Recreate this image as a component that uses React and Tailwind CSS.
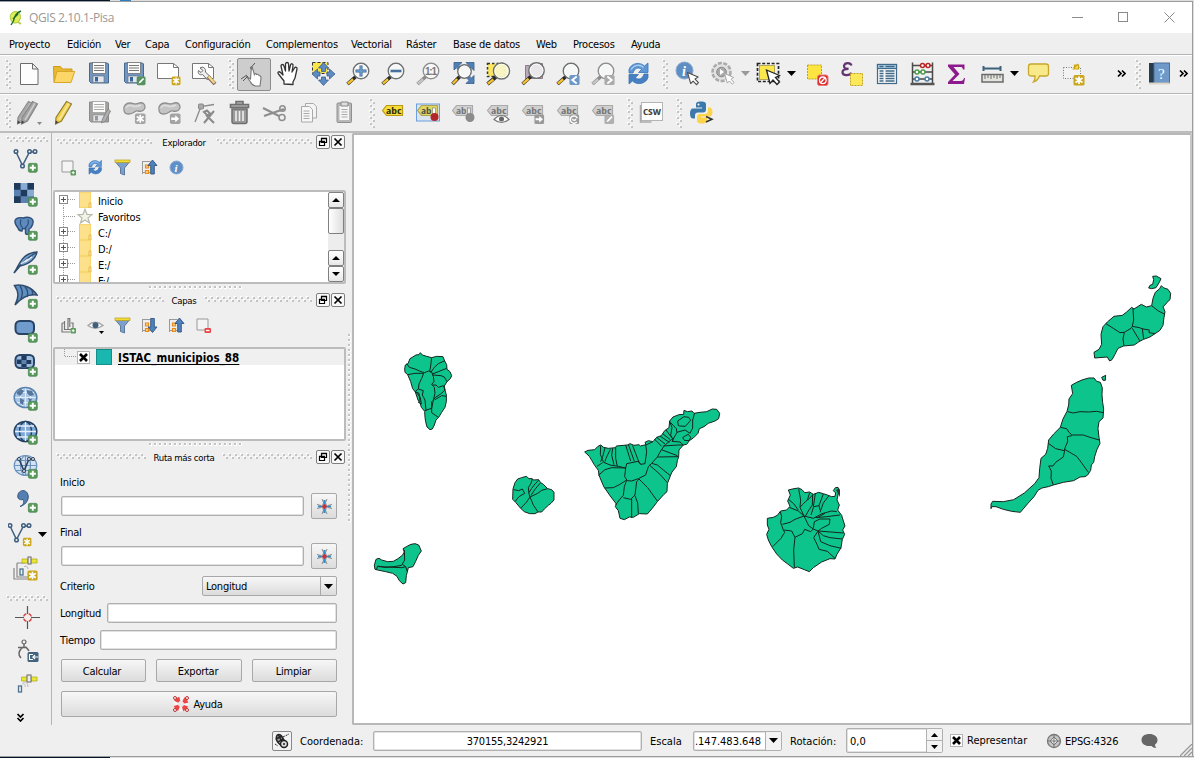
import React from "react";

/* ---------- shared drawing parts ---------- */

const Ic = ({ children, s = 25, className = "" }) => (
  <svg width={s} height={s} viewBox={`0 0 ${s} ${s}`} className={`shrink-0 ${className}`} fill="none">
    {children}
  </svg>
);

const Cell = ({ children, className = "w-[35px]" }) => (
  <div className={`flex h-[35px] shrink-0 items-center justify-center ${className}`}>{children}</div>
);

const Lbl = ({ children, className = "" }) => <span className={`pt-[2px] ${className}`}>{children}</span>;

const Down = ({ color = "#000" }) => (
  <svg width="9" height="5" viewBox="0 0 9 5" className="shrink-0"><path d="M0 0h9L4.500 5z" fill={color} /></svg>
);

function GripV({ h = 30 }) {
  const n = Math.floor(h / 6);
  return (
    <svg width="7" height={h} viewBox={`0 0 7 ${h}`} className="shrink-0">
      {Array.from({ length: n }, (_, i) => (
        <g key={i}>
          <rect x="0" y={i * 6} width="2" height="2" fill="#fff" />
          <rect x="1" y={i * 6 + 1} width="2" height="2" fill="#c4c4c4" />
          <rect x="3" y={i * 6 + 3} width="2" height="2" fill="#fff" />
          <rect x="4" y={i * 6 + 4} width="2" height="2" fill="#c4c4c4" />
        </g>
      ))}
    </svg>
  );
}

function GripH({ w }) {
  const n = Math.floor(w / 6);
  return (
    <svg width={w} height="7" viewBox={`0 0 ${w} 7`} className="shrink-0">
      {Array.from({ length: n }, (_, i) => (
        <g key={i}>
          <rect x={i * 6} y="0" width="2" height="2" fill="#fff" />
          <rect x={i * 6 + 1} y="1" width="2" height="2" fill="#c4c4c4" />
          <rect x={i * 6 + 3} y="3" width="2" height="2" fill="#fff" />
          <rect x={i * 6 + 4} y="4" width="2" height="2" fill="#c4c4c4" />
        </g>
      ))}
    </svg>
  );
}

const Dots = ({ n, vertical = false }) => (
  <svg width={vertical ? 4 : n * 5} height={vertical ? n * 5 : 4} className="shrink-0">
    {Array.from({ length: n }, (_, i) => (
      <g key={i} transform={vertical ? `translate(0 ${i * 5})` : `translate(${i * 5} 0)`}>
        <rect width="3" height="3" fill="#fff" />
        <rect width="2" height="2" fill="#c2c2c2" />
      </g>
    ))}
  </svg>
);

const Chev = ({ down = false }) => (
  <svg width="9" height="9" viewBox="0 0 9 9" className={down ? "shrink-0 rotate-90" : "shrink-0"} fill="none">
    <path d="M1 1.500l3 3-3 3M5 1.500l3 3-3 3" stroke="#000" strokeWidth="1.700" />
  </svg>
);

const Badge = ({ x = 14.3, y = 15, kind = "plus", fill = "#5c9a5c", s = 9.6 }) => (
  <g transform={`translate(${x} ${y}) scale(${s / 10})`}>
    <rect x=".4" y=".4" width="9.200" height="9.200" rx="1.500" fill={fill} stroke={kind === "plus" ? "#40824a" : "none"} strokeWidth=".8" />
    {kind === "plus" && <path d="M5 1.800v6.400M1.800 5h6.400" stroke="#fff" strokeWidth="2" />}
    {kind === "star" && <path d="M5 1.500v7M2 3l6 4M8 3L2 7" stroke="#fff" strokeWidth="1.500" />}
    {kind === "pen" && <path d="M2.300 7.700l1-2L7 2l1.200 1.200L4.500 7z" fill="#fff" />}
    {kind === "arrow" && <path d="M1.500 4h3.500V2l3.500 3L5 8V6H1.500z" fill="#fff" />}
    {kind === "left" && <path d="M7 1.800L3 5l4 3.200" stroke="#fff" strokeWidth="1.700" />}
    {kind === "right" && <path d="M3 1.800L7 5 3 8.200" stroke="#fff" strokeWidth="1.700" />}
    {kind === "pin" && <path d="M7.500 7.500A3.500 3.500 0 1 1 8 4M3.500 4.500a1.500 1.500 0 1 0 3 0" stroke="#fff" strokeWidth="1.400" />}
  </g>
);

const Lens = ({ cx = 15, cy = 10, r = 7.7, gray = false, fill = "#f4f6f6", op = 0.95 }) => (
  <g>
    <path d={`M${cx - r * 0.7} ${cy + r * 0.75}L1.500 23`} stroke={gray ? "#8c8c8c" : "#2b2b2b"} strokeWidth="3.600" />
    <path d={`M${cx - r * 0.7 - 2.5} ${cy + r * 0.75 + 2.5}L1.800 22.700`} stroke={gray ? "#c6c6c6" : "#f5c12e"} strokeWidth="2.400" />
    <circle cx={cx} cy={cy} r={r} fill={fill} fillOpacity={op} stroke={gray ? "#8f8f8f" : "#6f7272"} strokeWidth="1.500" />
    <circle cx={cx} cy={cy} r={r - 1.3} stroke="#fff" strokeOpacity=".8" />
  </g>
);

const Cursor = ({ x, y, k = 1, gray = false }) => (
  <path transform={`translate(${x} ${y}) scale(${k})`} d="M0 0l3.500 12 2.600-2.700 3.600 4 2.200-2.200-3.700-4L11.500 5z" fill="#fff" stroke={gray ? "#a5a5a5" : "#4c4c4c"} strokeWidth="1.200" strokeLinejoin="round" />
);

const Floppy = ({ gray = false }) => (
  <g>
    <path d="M2.500 2h18l1 1v19H4l-1.500-1.500z" fill={gray ? "#a2a2a2" : "#7296bf"} stroke={gray ? "#8a8a8a" : "#46698f"} />
    <rect x="5.500" y="1.500" width="13" height="11" fill="#fbfbf9" stroke={gray ? "#999" : "#666"} strokeWidth=".7" />
    <path d="M7 4.500h10M7 7h10M7 9.500h10" stroke={gray ? "#aaa" : "#777"} strokeWidth="1.200" />
    <rect x="6" y="15" width="11" height="6.500" fill="#e2e6ea" stroke={gray ? "#8a8a8a" : "#5b6b7c"} strokeWidth=".6" />
    <rect x="8" y="16" width="3" height="4.500" fill={gray ? "#999" : "#37659c"} />
  </g>
);

const Refresh = ({ k = 1 }) => (
  <g transform={`scale(${k})`}>
    <path d="M3 12V8.500C5 2 14 .5 18.500 5L22 2v9.500h-9.500l3-3c-3-3-7-1.500-8.500 3.500z" fill="#5e97d5" stroke="#3a73b4" strokeWidth=".8" />
    <path d="M22 13v3.500C20 23 11 24.500 6.500 20L3 23v-9.500h9.500l-3 3c3 3 7 1.500 8.500-3.500z" fill="#4680c2" stroke="#3a73b4" strokeWidth=".8" />
    <path d="M5 8.500c3-5 9-5.500 12.500-2" stroke="#a9cdf0" strokeWidth="1.300" />
  </g>
);

const Label = ({ gray = false, children, txt = "abc" }) => (
  <Ic>
    <path d="M1.500 10.500L5.500 5.500H21.500V15.500H5.500z" fill={gray ? "#d0d0d0" : "#f5dc36"} stroke={gray ? "#aaa" : "#b99a16"} strokeWidth="1.200" />
    <text x="5" y="13.600" fontSize="9" fontWeight="bold" textLength={txt === "ab" ? 10.5 : 15.5} lengthAdjust="spacingAndGlyphs" fontFamily="Open Sans, sans-serif" letterSpacing="0" fill={gray ? "#777" : "#33300e"}>{txt}</text>
    {children}
  </Ic>
);

const Blob = ({ k }) => (
  <Ic>
    <path d="M2 10C1 6 4 3 8 3c4 0 5 2 9 0 4-1 6 1 6 4s-3 5-7 4c-3-1-4 3-9 3-3 0-5-1-5-4z" fill="#c4c4c4" stroke="#8f8f8f" strokeWidth="1.300" />
    <path d="M4 8c1-3 5-3 7-2s6 0 8-1" stroke="#dedede" strokeWidth="1.500" />
    <Badge x={12.5} y={13} s={11.5} kind={k} fill="#a4a4a4" />
  </Ic>
);

/* ---------- toolbars ---------- */

function ToolbarOne() {
  return (
    <div className="flex h-[38px] items-center border-t border-white pb-[2px] pl-[5px]">
      <GripV />
      <Cell><Ic><path d="M3.500 2.500h12l5.500 5.500v15.500H3.500z" fill="#fdfdfd" stroke="#6c6c6c" /><path d="M15.500 2.500v5.500h5.500z" fill="#eee" stroke="#6c6c6c" /></Ic></Cell>
      <Cell><Ic><path d="M2 21L1.500 5.500h7l2 2.500h9.500v3" fill="#e8b830" stroke="#d09b18" /><path d="M2 21.500L5 10.500h17.700L19 21.500z" fill="#fcd767" stroke="#d9a728" /></Ic></Cell>
      <Cell><Ic><Floppy /></Ic></Cell>
      <Cell><Ic><Floppy /><Badge kind="pen" fill="#579160" /></Ic></Cell>
      <Cell><Ic><path d="M.500 2.500h16l5 4v11H.500z" fill="#fff" stroke="#777" /><path d="M16.500 2.500v4h5" stroke="#777" /><Badge kind="star" fill="#cba61c" /></Ic></Cell>
      <Cell><Ic><path d="M.500 2.500h16l5 4v11H.500z" fill="#fff" stroke="#777" /><path d="M16.500 2.500v4h5" stroke="#777" /><path d="M8 7c3-2 6 0 5.500 4l5 5-3 3-5-5.500c-3 1-5-1-4-4l2.500 2 2-2z" fill="#eee" stroke="#666" /><path d="M16 15.500l7 7.500" stroke="#866" strokeWidth="4" /><path d="M16.500 15.500l6 6.500" stroke="#f2d77b" strokeWidth="2.500" /></Ic></Cell>
      <div className="flex w-[14px] justify-end pr-[1px]"><GripV /></div>
      <Cell>
        <div className="mt-[2px] flex h-[33px] w-[34px] items-center justify-center rounded-[2px] border border-[#8c8c8c] bg-[#cdcdcd]">
          <Ic><path d="M9.500 17L5.500 14.500l4 5.500c1 2.500 3 3.500 5 4h4.500l1-8c0-2.500-2-2.500-2-2.500s-.8-1.800-2.300-1c-.7-1.300-2.200-1-2.400-.2L12 7.500c-.8-1.500-2-1-1.800.5z" fill="#fff" stroke="#777" strokeWidth="1.100" /><path d="M9.500 6l4.500-5M0 17l6-4M2 19l5-5" stroke="#555" strokeWidth="1" /><circle cx="10.500" cy="5.800" r="1.600" fill="#777" /></Ic>
        </div>
      </Cell>
      <Cell><Ic><path d="M8 23v-3L2.500 13c-1.500-2 .5-3 2-1.500L7 14 5 5c0-2 2.500-2 3 0l1.500 5V3c0-2 3-2 3 0l.5 7 1.500-6c.5-2 3-1.500 2.500 1L16 11l2.500-4c1-1.500 3-.5 2.500 1l-2 9-2 4v2.500z" fill="#fff" stroke="#333" strokeWidth="1.300" strokeLinejoin="round" /></Ic></Cell>
      <Cell><Ic><rect x="1.500" y="1.500" width="15.500" height="11" fill="#fbe445" stroke="#333" strokeDasharray="3 2" /><path d="M12.500 1.500l5 5.500h-3v3.500h-4V7h-3zM12.500 24.500l5-5.500h-3v-3h-4v3h-3zM1 13l5.500-5v3H9v4H6.500v3zM24 13l-5.500-5v3H16v4h2.500v3z" fill="#5d8cc5" stroke="#385f8d" strokeWidth=".8" /></Ic></Cell>
      <Cell><Ic><Lens /><path d="M15 4.500v11M9.500 10h11" stroke="#41668f" strokeWidth="3" /><path d="M15 5.300v9.400M10.300 10h9.400" stroke="#6ea0d6" strokeWidth="1.500" /></Ic></Cell>
      <Cell><Ic><Lens /><path d="M9.500 10h11" stroke="#47729f" strokeWidth="2.600" /></Ic></Cell>
      <Cell><Ic><Lens gray /><text x="9" y="13.500" fontSize="10" fontWeight="bold" textLength="12" letterSpacing="0" fontFamily="Liberation Sans" fill="#777">1:1</text></Ic></Cell>
      <Cell><Ic><path d="M3 1.500h8L3 9zM23 1.500v8L15 1.500zM23 22.500h-8l8-8z" fill="#507fb6" stroke="#345c88" strokeWidth=".8" /><path d="M4 3l5 5M22 3l-5 5M22 21l-5-5" stroke="#507fb6" strokeWidth="4" /><Lens cx={13.5} cy={10.5} r={6.7} /></Ic></Cell>
      <Cell><Ic><rect x="1.500" y="2.500" width="17" height="13" fill="#fbe764" stroke="#333" strokeDasharray="2.500 2" strokeWidth="1.500" /><Lens cx={15.5} cy={10} r={8} fill="#f8f5c8" /></Ic></Cell>
      <Cell><Ic><path d="M4.500 4.500h4l3-2h10v15h-17z" fill="#b9a9b9" stroke="#8a7d8a" /><Lens cx={15.5} cy={9.500} r={7.700} fill="#eceaec" /></Ic></Cell>
      <Cell><Ic><Lens /><Badge x={13} y={13.5} s={11} kind="left" fill="#6d98c6" /></Ic></Cell>
      <Cell><Ic><Lens gray /><Badge x={13} y={13.5} s={11} kind="right" fill="#aaa" /></Ic></Cell>
      <Cell><Ic><Refresh /></Ic></Cell>
      <div className="flex w-[14px] justify-end pr-[1px]"><GripV /></div>
      <Cell><Ic><circle cx="9.500" cy="9.500" r="8.500" fill="#608ec3" stroke="#86a9d0" /><text x="7" y="14.500" fontSize="14" fontStyle="italic" fontWeight="bold" fontFamily="Liberation Serif" fill="#fff">i</text><Cursor x={12.500} y={11.500} k={0.92} /></Ic></Cell>
      <Cell><Ic><circle cx="11.500" cy="11" r="9" fill="#e2e2e2" stroke="#aaa" strokeWidth="2.500" strokeDasharray="4 1.500" /><circle cx="11.500" cy="11" r="4.800" fill="#aaa" stroke="#888" /><path d="M10 8l4 3-4 3z" fill="#fff" /><Cursor gray x={14.500} y={12.500} k={0.8} /></Ic></Cell>
      <Cell className="w-[10px]"><Down color="#999" /></Cell>
      <div className="w-[1px]" />
      <Cell><Ic><rect x="1.500" y="2.500" width="21" height="18" stroke="#222" strokeWidth="1.700" strokeDasharray="3 1.700" /><rect x="3.500" y="4.500" width="15" height="14" fill="#fce74c" stroke="#b7a75a" /><path d="M10.500 9l3.500 13.500 3-3.500 4 4.500 2.500-2.500-4-4.500 4-2z" fill="#fff" stroke="#222" strokeWidth="1.300" /></Ic></Cell>
      <Cell className="w-[10px]"><Down /></Cell>
      <div className="w-[4px]" />
      <Cell><Ic><rect x="2.500" y="4" width="14" height="14" fill="#fce541" stroke="#c3a320" strokeDasharray="2 1" /><rect x="12.500" y="14" width="10.500" height="10.500" rx="2" fill="#d92b2b" stroke="#e77" /><circle cx="17.800" cy="19.300" r="3.300" stroke="#fff" strokeWidth="1.300" /><path d="M15.500 21.800l4.600-5" stroke="#fff" strokeWidth="1.300" /></Ic></Cell>
      <Cell><Ic><path d="M11.500 4.500C10.500 1.500 5 1.300 4 4.800c-.5 2 2 3.200 4.500 3-4 0-6 1-6 3.500 0 3.800 7.500 3.500 9 .5" stroke="#653370" strokeWidth="2.200" /><rect x="10.500" y="12.500" width="12" height="12" fill="#fce95a" stroke="#c3a320" strokeDasharray="2 1" /></Ic></Cell>
      <Cell><Ic><rect x="2.500" y="3.500" width="19" height="19" fill="#f6f8fa" stroke="#426a87" strokeWidth="1.200" /><rect x="2.500" y="3.500" width="19" height="4" fill="#a8d2ec" stroke="#426a87" strokeWidth="1.200" /><path d="M4.500 10h4M10.500 10h9M4.500 12.500h4M10.500 12.500h9M4.500 15h4M10.500 15h9M4.500 17.500h4M10.500 17.500h9M4.500 20h4M10.500 20h9M4.500 5.500h4M10.500 5.500h9" stroke="#426a87" strokeWidth="1.300" /></Ic></Cell>
      <Cell><Ic><path d="M2.500 1.500v22M22.500 1.500v22M2 4.500h21M2 11h21M2 18h21" stroke="#4a4a4a" strokeWidth="1.500" /><path d="M.500 23h24" stroke="#555" strokeWidth="2.500" /><g fill="#fff" strokeWidth="1.500"><circle cx="12.500" cy="4.500" r="2" stroke="#b22" /><circle cx="18" cy="4.500" r="2" stroke="#b22" /><circle cx="7" cy="11" r="2" stroke="#4b9d4b" /><circle cx="13" cy="11" r="2" stroke="#4b9d4b" /><circle cx="7" cy="18" r="2" stroke="#477fa6" /><circle cx="17" cy="18" r="2" stroke="#477fa6" /></g></Ic></Cell>
      <Cell><Ic><path d="M3 3.500H19.500v5H18c-.5-2-1-2.500-3-2.500H8.500l6 7-7 7h8c2 0 3-1 3.500-3h1l-1 6H3v-2l7-7.500-7-8z" fill="#8d1a8d" /></Ic></Cell>
      <Cell className="w-[34px]"><Ic><path d="M3.500 5v5M20.500 5v5M3.500 7.500h17" stroke="#3c617b" strokeWidth="2" /><rect x="2" y="13.500" width="21" height="7.500" fill="#e4e4de" stroke="#6b6b6b" strokeWidth="1.500" /><path d="M5 14v4M8 14v3M11 14v4M14 14v3M17 14v4M20 14v3" stroke="#6b6b6b" /></Ic></Cell>
      <Cell className="w-[10px]"><Down /></Cell>
      <div className="w-[2px]" />
      <Cell><Ic><path d="M5 3h15q2.500 0 2.500 2.500v7Q22.500 15 20 15h-6.500c-1 3-3 5-6 6 1.500-2 1.700-4 1.500-6H5q-2.500 0-2.500-2.500v-7Q2.500 3 5 3z" fill="#f8e98b" stroke="#c9a62c" strokeWidth="1.300" /></Ic></Cell>
      <Cell><Ic><rect x="2.500" y="6.500" width="17" height="11" fill="#f3f3f3" stroke="#777" strokeDasharray="1 1.500" /><path d="M11.500 8h2v-4h4v4zM13 7l4-4" fill="#f7e14d" stroke="#cba61c" strokeWidth="1.200" /><rect x="12.500" y="14" width="11" height="10.500" rx="1.500" fill="#cba61c" /><path d="M18 15.500v7.500M14.500 17l7 4.500M21.500 17l-7 4.500" stroke="#fff" strokeWidth="1.800" /></Ic></Cell>
      <div className="ml-[26px] w-[18px]"><Chev /></div>
      <GripV />
      <Cell><Ic><rect x="2" y="2" width="5" height="20" fill="#263b4b" /><rect x="7" y="2" width="15.500" height="20" fill="#6e99c8" stroke="#4c7098" /><path d="M2 22.500h20.500" stroke="#dcd6c8" strokeWidth="2" /><text x="11" y="17.500" fontSize="15" fontFamily="Liberation Serif" fill="#fff">?</text></Ic></Cell>
      <div className="ml-[2px]"><Chev /></div>
    </div>
  );
}

const Pencil = ({ a, b, x = 0 }) => (
  <g transform={`translate(${x} 0)`}>
    <path d="M14.500 1.500l5 2.500-10 17-6 3 .5-6.500z" fill={a} stroke={b} strokeWidth="1.100" />
    <path d="M17 3L7 20" stroke="#fff" strokeOpacity=".45" strokeWidth="1.700" />
    <path d="M3.500 24l.3-3.500 2.700 1.700z" fill="#444" />
  </g>
);

function ToolbarTwo() {
  return (
    <div className="flex h-[37px] items-center border-t border-white pb-[1px] pl-[5px]">
      <GripV />
      <Cell><Ic><Pencil a="#a9a9a9" b="#8a8a8a" x={-3} /><Pencil a="#a0a0a0" b="#858585" x={1} /><path d="M20 22h5l-2.500 3z" fill="#888" /></Ic></Cell>
      <Cell><Ic><Pencil a="#f0d04a" b="#8f7b28" /></Ic></Cell>
      <Cell><Ic><Floppy gray /><path d="M21 9l2.500 2-5 10-4 2 1-4z" fill="#b0b0b0" stroke="#888" /></Ic></Cell>
      <Cell><Blob k="star" /></Cell>
      <Cell><Blob k="arrow" /></Cell>
      <Cell><Ic><path d="M3 22L9 6.500l13-2" stroke="#8a8a8a" strokeWidth="1.300" /><rect x="6.500" y="4" width="5" height="5" rx="1" fill="#aaa" stroke="#888" /><path d="M12 12l3-1.500 3 3-2.500 2zM14 15l8 8M22 11l-10 12" stroke="#8a8a8a" strokeWidth="2" /></Ic></Cell>
      <Cell><Ic><path d="M3.500 4.500h18v3h-18zM9 4V1.500h7V4" stroke="#707070" strokeWidth="1.600" fill="#aaa" /><path d="M5 9h15v12.500q0 2-2 2H7q-2 0-2-2z" fill="#9a9a9a" stroke="#707070" strokeWidth="1.500" /><path d="M9 11v10M12.500 11v10M16 11v10" stroke="#efefef" strokeWidth="1.600" /></Ic></Cell>
      <Cell><Ic><path d="M1 8l16 8M2 16l20-7" stroke="#8e8e8e" strokeWidth="2.200" /><circle cx="20.500" cy="8.500" r="2.700" stroke="#8e8e8e" strokeWidth="1.600" /><circle cx="20" cy="17.500" r="3" stroke="#8e8e8e" strokeWidth="1.600" /></Ic></Cell>
      <Cell><Ic><path d="M8.500 3.500h8l3 3V18h-11z" fill="#f4f4f4" stroke="#a9a9a9" /><path d="M4.500 6.500h8l3 3V22h-11z" fill="#f7f7f7" stroke="#a9a9a9" /><path d="M6.500 11h6M6.500 13.500h6M6.500 16h6M6.500 18.500h6" stroke="#aaa" /></Ic></Cell>
      <Cell><Ic><rect x="5" y="3" width="14.500" height="19.500" rx="1" fill="#b8b8b8" stroke="#8f8f8f" /><path d="M7.500 6h9.500v14H7.500z" fill="#f6f6f6" /><path d="M9 2h7v4H9z" fill="#ddd" stroke="#888" /><path d="M9.500 9.500h6M9.500 12h6M9.500 14.500h6M9.500 17h6" stroke="#aaa" /></Ic></Cell>
      <div className="flex w-[14px] justify-end"><GripV /></div>
      <Cell><Label /></Cell>
      <Cell><Label txt="ab"><rect x=".5" y="4" width="23" height="17" stroke="#6e9fdd" fill="#9fc3ee" fillOpacity=".25" /><rect x="16.500" y="8" width="3" height="7" fill="#fff" stroke="#777" strokeWidth=".6" /><circle cx="18.500" cy="17" r="4" fill="#b3262a" /></Label></Cell>
      <Cell><Label gray txt="ab"><rect x="16.500" y="8" width="3" height="7" fill="#eee" stroke="#777" strokeWidth=".6" /><circle cx="19" cy="17.500" r="4.500" fill="#8b8b8b" /></Label></Cell>
      <Cell><Label gray><path d="M8 19.500q7.500-8 15 0-7.500 6-15 0z" fill="#fff" stroke="#777" strokeWidth="1.200" /><circle cx="15.500" cy="19" r="2.500" fill="#666" /></Label></Cell>
      <Cell><Label gray><Badge x={13} y={14} s={10.500} kind="arrow" fill="#999" /></Label></Cell>
      <Cell><Label gray><Badge x={13} y={14} s={10.500} kind="pin" fill="#999" /></Label></Cell>
      <Cell><Label gray><Badge x={13} y={14} s={10.500} kind="pen" fill="#b0b0b0" /></Label></Cell>
      <div className="flex w-[13px] justify-end"><GripV /></div>
      <Cell><Ic><path d="M1.500 5v17h11" stroke="#aaa" strokeWidth="1.500" /><rect x="2.500" y="2.500" width="21" height="18" fill="#fff" stroke="#b5b5b5" /><text x="4" y="14.500" fontSize="9.500" fontWeight="bold" textLength="18" lengthAdjust="spacingAndGlyphs" letterSpacing="0" fontFamily="Open Sans" fill="#444">CSW</text></Ic></Cell>
      <div className="flex w-[15px] justify-end pr-[1px]"><GripV /></div>
      <Cell><Ic>
        <path d="M12 1.500c-4 0-5 1-5 3v3h6v1H4c-2 0-3 2-3 5s1 5 3 5h2v-3c0-2 1-3 3-3h5c2 0 3-1 3-3V4.500c0-2-1-3-5-3z" fill="#3b78ab" />
        <circle cx="9.500" cy="4.500" r="1" fill="#fff" />
        <path d="M13 23.500c4 0 5-1 5-3v-3h-6v-1h8.500c2 0 3-2 3-4.500s-1-4.500-3-4.500H19v3c0 2-1 3.500-3 3.500h-5c-2 0-3 1-3 3v3.500c0 2 1 3 5 3z" fill="#fbd449" />
        <path d="M17 16.500l6 2.700-6 2.800" stroke="#333" strokeWidth="1.500" />
      </Ic></Cell>
    </div>
  );
}

/* ---------- left toolbar ---------- */

const Vee = ({ x = 0 }) => (
  <g stroke="#3f5f80" strokeWidth="1.500" fill="#efefef" transform={`translate(${x} 0)`}>
    <path d="M3 4l6.500 13.500L16.500 4H21" fill="none" />
    <circle cx="3" cy="3.500" r="1.800" /><circle cx="9.500" cy="18" r="1.800" /><circle cx="16.500" cy="3.500" r="1.800" /><circle cx="22" cy="3.500" r="1.800" />
  </g>
);

const Globe = ({ f = "#d3e3f4", s = "#6d94c0" }) => (
  <g stroke={s} strokeWidth="1.200">
    <ellipse cx="12.500" cy="11.500" rx="11.300" ry="10" fill={f} />
    <ellipse cx="12.500" cy="11.500" rx="5" ry="10" /><path d="M12.500 1.500v20M1.500 11.500h22M3 6.500h19M3 16.500h19" />
  </g>
);

function SideBar() {
  const row = "flex h-[34px] shrink-0 items-center justify-center";
  return (
    <div className="flex h-[592px] w-[52px] shrink-0 flex-col border-r border-[#b5b5b5]">
      <div className="flex h-[10px] items-end justify-center pl-[2px] pt-[5px]"><GripH w={42} /></div>
      <div className={row}><Ic><Vee /><Badge x={15} y={15} /></Ic></div>
      <div className={row}><Ic><path d="M1 1h20v20H1z" fill="#5a81af" /><path d="M1 1h6.700v6.700H1zM14.300 1H21v6.700h-6.700zM7.700 7.700h6.600v6.600H7.700zM1 14.300h6.700V21H1z" fill="#203a5c" /><path d="M7.700 1h6.600v6.700H7.700zM14.300 7.700H21v6.600h-6.700z" fill="#88abd3" /><Badge x={15} y={15} /></Ic></div>
      <div className={row}><Ic><path d="M2.500 3.500C4.500 1 8 1.500 10.500 2c2-1 6-1 8 .5 2.500 2 1.500 6-.5 9l-2 1.500v3.500c0 2-3.500 2.500-3.500.5V12c-1 1-2 1-3 .5L9 15c-2 0-3.500-1-4-3C3 9.500 1 6 2.500 3.500z" fill="#5d8bbf" stroke="#2f5078" strokeWidth="1.400" /><path d="M8 3.500c-1 3-1 6 1.500 8M15 3.500c1 3 0 6-2.500 8" stroke="#2f5078" strokeWidth="1.200" /><Badge x={15} y={15} /></Ic></div>
      <div className={row}><Ic><path d="M1 23C6 16 8 3 24 2c-1 6-7 12-17 14z" fill="#7ba3d0" stroke="#2f4c6d" strokeWidth="1.400" /><path d="M1 23C6 16 12 8 23 3" stroke="#2f4c6d" strokeWidth="1.200" /><path d="M8 14l7-5M12 12l7-5" stroke="#e6eff8" strokeWidth="1.200" /><Badge x={15} y={15} /></Ic></div>
      <div className={row}><Ic><path d="M1.500 1.500C10 0 19 3 24 11c-7-1-15 2-22 10C6 13 6 8 1.500 1.500z" fill="#5f8fc3" stroke="#2f4c6d" strokeWidth="1.500" /><path d="M7 2c3 4 3 8 1 13M12 3c3 3 3 7 2 10M18 5c2 2 2 4 1 6" stroke="#2f4c6d" strokeWidth="1.300" /><Badge x={15} y={15} /></Ic></div>
      <div className={row}><Ic><rect x="2.500" y="3" width="18.500" height="13" rx="4.500" fill="#6f9bcd" stroke="#274465" strokeWidth="2" /><Badge x={15} y={15} /></Ic></div>
      <div className={row}><Ic><rect x="2.500" y="3" width="18.500" height="13" rx="4.500" fill="#9dbce0" stroke="#274465" strokeWidth="2" /><path d="M3.500 7h5V4h5v4h5v4h-5v4h-5v-4h-5z" fill="#5c82b0" /><path d="M8.500 4h5v4h-5zM4 8h4.500v4H4zM13.500 8h4.500v4h-4.500zM8.500 12h5v3.500h-5z" fill="#203a5c" /><Badge x={15} y={15} /></Ic></div>
      <div className={row}><Ic><Globe f="#a9c6e6" s="#e0ecf8" /><ellipse cx="12.500" cy="11.500" rx="11.300" ry="10" stroke="#5881ae" strokeWidth="1.500" /><path d="M4 6l4-3 3 2-2 3-2 2-3-2zM14 4l5 1 2 4-4 1-3-3zM7 12l4 2-1 5-3-2zM15 12l4 1-2 4z" fill="#56769c" /><Badge x={15} y={15} /></Ic></div>
      <div className={row}><Ic><ellipse cx="12.500" cy="11.500" rx="11.300" ry="10" fill="#7ba7d8" stroke="#27415f" strokeWidth="1.500" /><g stroke="#27415f" strokeWidth="1.500"><ellipse cx="12.500" cy="11.500" rx="6" ry="10" /></g><path d="M12.500 2v19M2 11.500h21M4 6h17M4 17h17" stroke="#e8f1fb" strokeWidth="1.300" /><Badge x={15} y={15} /></Ic></div>
      <div className={row}><Ic><Globe /><path d="M6 5l5 12 5-12h4" stroke="#2b3f57" strokeWidth="1.600" /><g fill="#efefef" stroke="#2b3f57"><circle cx="6" cy="5" r="1.500" /><circle cx="11" cy="17" r="1.500" /><circle cx="16" cy="5" r="1.500" /><circle cx="20" cy="5" r="1.500" /></g><Badge x={15} y={15} /></Ic></div>
      <div className={row}><Ic><path d="M7 18.500c3.500-1.500 4.500-4.500 3-7-4 1-6-1.500-5-5C6 2.500 11 1.500 13.500 4c4 4.500 1 12.500-6.500 14.500z" fill="#537fb3" stroke="#33547c" /><Badge x={15} y={15} /></Ic></div>
      <div className="flex h-[34px] shrink-0 items-center pl-[8px]"><Ic><Vee x={-1} /><Badge x={14.500} y={15.300} kind="star" fill="#cba61c" s={9.300} /></Ic><div className="ml-[5px]"><Down /></div></div>
      <div className={row}><Ic><path d="M1 12v11h16M4 7v14h12M4 7h8" stroke="#888" strokeWidth="1.200" /><rect x="7" y="13" width="3" height="6" stroke="#4c718f" strokeWidth="1.300" /><path d="M9 3h6v4H9zM18 3h6v4h-6z" fill="#e9e736" stroke="#b5ac1c" strokeWidth=".8" /><rect x="15" y="1" width="3" height="7" fill="#eee" stroke="#666" /><path d="M11 11c2-2 4 0 4 2" stroke="#aaa" /><Badge x={14} y={14} s={11} kind="star" fill="#cba61c" /></Ic></div>
      <div className="flex h-[17px] shrink-0 items-center justify-center pl-[2px] pt-[9px]"><GripH w={42} /></div>
      <div className="flex h-[31px] shrink-0 items-center justify-center pl-[4px]"><Ic><path d="M12.500 1v8M12.500 16v8M0 12.500h9M16 12.500h9" stroke="#555" strokeWidth="1.200" /><circle cx="12.500" cy="12.500" r="4" stroke="#d44" strokeWidth="1.500" strokeDasharray="3.700 2.500" strokeDashoffset="-1" /></Ic></div>
      <div className={row + " pl-[3px]"}><Ic><circle cx="9" cy="4" r="2" stroke="#666" strokeWidth="1.200" /><path d="M9 6v3M3 9.500h9M8 9c-5 4-5 8-2 11M10 9c3 1 3 3 4 4" stroke="#666" strokeWidth="1.500" /><rect x="12.500" y="14" width="11" height="10" rx="1.500" fill="#41637d" /><path d="M18 16.500h-3.500v5H18M23 19h-5l2-2M18 19l2 2" stroke="#fff" strokeWidth="1.100" /></Ic></div>
      <div className={row + " pl-[3px]"}><Ic><path d="M6.500 5h6v4h-6zM16 5h6v4h-6z" fill="#e9e736" stroke="#b5ac1c" strokeWidth=".8" /><rect x="12" y="3" width="4" height="7" fill="#eee" stroke="#666" /><path d="M7 12c2-1 4 1 3 3M8 10c4 0 5 2 5 5" stroke="#bbb" /><rect x="3.500" y="14" width="3" height="6" stroke="#4c718f" strokeWidth="1.300" /></Ic></div>
      <div className="flex h-[24px] shrink-0 items-center pl-[16px] pt-[8px]"><Chev down /></div>
    </div>
  );
}

/* ---------- docks ---------- */

const DockBtn = ({ children }) => (
  <div className="flex h-[14px] w-[14px] items-center justify-center rounded-[2px] border border-[#7f7f7f] bg-[#f8f8f8]">
    <svg width="10" height="10" viewBox="0 0 10 10" fill="none" stroke="#000">{children}</svg>
  </div>
);

const DockTitle = ({ text, w, tw }) => (
  <div className="flex h-[17px] shrink-0 items-center pl-[4px]">
    <GripH w={w} />
    <div className={`${tw} pt-[2px] text-center text-[9.5px] tracking-[-0.3px]`}>{text}</div>
    <GripH w={w} />
    <div className="ml-auto mr-[3px] flex gap-[1px]">
      <DockBtn><path d="M3.500 1.500h5v4h-5zM1.500 4.500h5v4h-5z" fill="#fff" strokeWidth="1.200" /><path d="M3 1.500h6M1 4.500h6" strokeWidth="1.500" /></DockBtn>
      <DockBtn><path d="M1.500 1.500l7 7M8.500 1.500l-7 7" strokeWidth="1.700" /></DockBtn>
    </div>
  </div>
);

const Splitter = ({ h }) => <div className={`flex shrink-0 items-center justify-center ${h}`}><div className="-ml-[8px] flex"><Dots n={19} /></div></div>;
const Small = ({ children }) => <div className="flex w-[27px] items-center justify-center"><Ic s={17}>{children}</Ic></div>;

const Funnel = () => <g><path d="M1.500 3h14l-5 6v7l-4-1.500V9z" fill="#7da0cb" stroke="#47678f" strokeWidth=".8" /><rect x="1" y="1" width="15" height="2.500" fill="#f2dc38" stroke="#b99d20" strokeWidth=".7" /></g>;
const TreeIc = ({ up }) => (
  <g>
    <path d="M1.500 2v13M1.500 2.500h8M1.500 13.500h8" stroke="#999" />
    <path d="M4.500 6h3v3h-3zM4.500 11.500h3v3h-3z" fill="#fbd28b" stroke="#e88b1a" strokeWidth="1.200" />
    <path transform={up ? "" : "translate(0 16.500) scale(1 -1)"} d="M11.500 1L16 6.500h-2.700V15H9.700V6.500H7z" fill="#4f81bb" stroke="#32557f" strokeWidth=".9" />
  </g>
);

const TreeRow = ({ text, star = false, first = false }) => (
  <div className="flex h-[16px] shrink-0 items-center pl-[3px]">
    <svg width="19" height="16" viewBox="0 0 19 16" fill="none" className="shrink-0">
      <path d={first ? "M5.500 7v9" : "M5.500 0v16"} stroke="#999" strokeDasharray="1 1" />
      <path d={star ? "M6 8.500h12" : "M6 7.500h12"} stroke="#999" strokeDasharray="1 1" />
      {!star && <g><rect x="1.500" y="3.500" width="8" height="8" fill="#fff" stroke="#8a8a8a" /><path d="M3 7.500h5M5.500 5v5" stroke="#555" /></g>}
    </svg>
    <svg width="16" height="16" viewBox="0 0 16 16" fill="none" className="shrink-0">
      {star
        ? <path d="M8 1.300l2 5 5 .3-4 3.300 1.500 5L8 12l-4.500 3L5 10 1 6.600l5-.3z" fill="#f3f3ec" stroke="#b7b9a6" strokeWidth="1.200" />
        : <g><path d="M2 0h12v16H2z" fill="#f2cb58" /><path d="M3 .5h10.500v15H3z" fill="#fce08a" /><path d="M12 11h2v5h-2z" fill="#fbe6a2" stroke="#ddb33a" strokeWidth=".8" /></g>}
    </svg>
    <span className="ml-[5px] pt-[3px]">{text}</span>
  </div>
);

const ScrollBtn = ({ up = false, cls = "" }) => (
  <div className={`flex h-[16px] w-[16px] shrink-0 items-center justify-center rounded-[2px] border border-[#808080] bg-gradient-to-b from-white to-[#e8e8e8] ${cls}`}>
    <svg width="8" height="4" viewBox="0 0 8 4"><path d={up ? "M0 4L4 0l4 4z" : "M0 0h8L4 4z"} fill="#000" /></svg>
  </div>
);

const Check = () => (
  <div className="flex h-[13px] w-[13px] shrink-0 items-center justify-center border border-[#b5b5b5] bg-white">
    <svg width="9" height="9" viewBox="0 0 9 9"><path d="M1 1l7 7M8 1L1 8" stroke="#000" strokeWidth="2.600" /></svg>
  </div>
);

const field = "rounded-[2px] border border-[#b0b0b0] bg-white shadow-[inset_0_0_0_0.5px_#c4c4c4]";
const button = "flex items-center justify-center rounded-[2px] border border-[#a8a8a8] bg-gradient-to-b from-[#f7f7f7] to-[#dcdcdc]";

const PickButton = () => (
  <div className={`${button} h-[26px] w-[26px] border-[#8f8f8f]`}>
    <svg width="17" height="17" viewBox="0 0 17 17" fill="none">
      <path d="M8.500 2v13M2 8.500h13" stroke="#2f8fce" strokeWidth="2.200" />
      <path d="M6 1l1.700 4L6.500 6.500M11 1L9.300 5l1.200 1.500M6 16l1.700-4-1.200-1.500M11 16l-1.700-4 1.200-1.500M1 6.500l4 1M1 10.500l4-1M16 6.500l-4 1M16 10.500l-4-1" stroke="#8a8a8a" />
      <circle cx="8.500" cy="8.500" r="2.200" fill="#d32f2f" />
    </svg>
  </div>
);

function Docks() {
  return (
    <div className="flex h-[592px] w-[296px] shrink-0 flex-col">
      <DockTitle text="Explorador" w={96} tw="w-[64px]" />
      <div className="flex h-[40px] shrink-0 items-center pb-[5px] pl-[3px]">
        <Small><path d="M2 2h11v11H2z" fill="#f4f4f4" stroke="#999" /><rect x="10.500" y="11" width="5.500" height="5.500" rx="1" fill="#5c9a5c" /><path d="M13.200 12.200v3M11.700 13.700h3" stroke="#fff" /></Small>
        <Small><Refresh k={0.66} /></Small>
        <Small><Funnel /></Small>
        <Small><TreeIc up /></Small>
        <Small><circle cx="8.500" cy="8.500" r="6.500" fill="#5f8fc6" stroke="#86a9d0" /><text x="6.500" y="12.500" fontSize="11" fontStyle="italic" fontWeight="bold" fontFamily="Liberation Serif" fill="#fff">i</text></Small>
      </div>
      <div className="ml-[1px] flex h-[94px] w-[293px] shrink-0 overflow-hidden rounded-[2px] border-2 border-[#bcbcbc] bg-white">
        <div className="h-[90px] min-w-0 flex-1 overflow-hidden">
          <TreeRow text="Inicio" first />
          <TreeRow text="Favoritos" star />
          <TreeRow text="C:/" />
          <TreeRow text="D:/" />
          <TreeRow text="E:/" />
          <TreeRow text="F:/" />
        </div>
        <div className="flex w-[16px] flex-col bg-[#ededed]">
          <ScrollBtn up />
          <div className="h-[26px] w-[16px] rounded-[2px] border border-[#808080] bg-gradient-to-r from-white to-[#dedede]" />
          <div className="flex-1" />
          <ScrollBtn up />
          <ScrollBtn />
        </div>
      </div>
      <Splitter h="h-[7px]" />
      <DockTitle text="Capas" w={108} tw="w-[40px]" />
      <div className="flex h-[39px] shrink-0 items-center pb-[5px] pl-[3px]">
        <Small><path d="M2 6v9h8M2 6h2M4.500 4v8.500H13V6h-2M8 13V1.500h1.800V10" stroke="#777" strokeWidth="1.200" /><rect x="10.500" y="11" width="5.500" height="5.500" rx="1" fill="#5c9a5c" /><path d="M13.200 12.200v3M11.700 13.700h3" stroke="#fff" /></Small>
        <Small><path d="M1 8.500Q8 2 16 8.500 8 14 1 8.500z" fill="#fff" stroke="#a6a6a6" strokeWidth="1.500" /><circle cx="8.500" cy="8.300" r="3" fill="#3f5f7d" /><path d="M12 14h5l-2.500 3z" fill="#000" /></Small>
        <Small><Funnel /></Small>
        <Small><TreeIc /></Small>
        <Small><TreeIc up /></Small>
        <Small><path d="M2 2h11v11H2z" fill="#f4f4f4" stroke="#999" /><rect x="9.500" y="11" width="6.500" height="5" rx="1" fill="#e8484c" /><path d="M11 13.500h3.500" stroke="#fff" strokeWidth="1.300" /></Small>
      </div>
      <div className="ml-[1px] h-[94px] w-[293px] shrink-0 rounded-[2px] border-2 border-[#bcbcbc] bg-white">
        <div className="flex h-[16px] items-center bg-[#f0f0f0] pl-[9px]">
          <svg width="13" height="16" viewBox="0 0 13 16" className="shrink-0"><path d="M.500 0v7.500H12" fill="none" stroke="#999" strokeDasharray="1 1" /></svg>
          <Check />
          <div className="ml-[6px] h-[16px] w-[16px] border border-[#128d88] bg-[#1ab7b1]" />
          <span className="ml-[6px] pt-[2px] text-[11.5px] font-bold tracking-[0.03px] underline underline-offset-2 decoration-1 [text-decoration-skip-ink:none]">ISTAC_municipios_88</span>
        </div>
      </div>
      <Splitter h="h-[7px]" />
      <DockTitle text="Ruta más corta" w={90} tw="w-[76px]" />
      <div className="flex flex-col pl-[9px] pr-[11px]">
        <div className="flex h-[28px] items-end pb-[3px]"><div className="-ml-px h-[15px] leading-[15px]">Inicio</div></div>
        <div className="flex h-[26px] items-center justify-between"><div className={`${field} h-[20px] w-[243px]`} /><PickButton /></div>
        <div className="flex h-[24px] items-center pt-[2px]"><Lbl className="-ml-px">Final</Lbl></div>
        <div className="flex h-[26px] items-center justify-between"><div className={`${field} h-[20px] w-[243px]`} /><PickButton /></div>
        <div className="mt-[7px] flex h-[20px] items-center justify-between">
          <Lbl className="-ml-px">Criterio</Lbl>
          <div className={`${button} h-[20px] w-[135px] pl-[3px]`}>
            <Lbl className="flex-1">Longitud</Lbl>
            <div className="flex h-full w-[16px] items-center justify-center border-l border-[#a8a8a8]"><Down /></div>
          </div>
        </div>
        <div className="mt-[7px] flex h-[20px] items-center justify-between"><Lbl className="-ml-px">Longitud</Lbl><div className={`${field} h-[20px] w-[230px]`} /></div>
        <div className="mt-[7px] flex h-[20px] items-center justify-between"><Lbl className="-ml-px">Tiempo</Lbl><div className={`${field} h-[20px] w-[237px]`} /></div>
        <div className="mt-[9px] flex justify-between">
          <div className={`${button} h-[23px] w-[85px] pr-[3px]`}><Lbl>Calcular</Lbl></div>
          <div className={`${button} h-[23px] w-[86px] pr-[2px]`}><Lbl>Exportar</Lbl></div>
          <div className={`${button} h-[23px] w-[85px] pr-[2px]`}><Lbl>Limpiar</Lbl></div>
        </div>
        <div className={`${button} mt-[9px] h-[26px] gap-[4px] pr-[2px]`}>
          <svg width="16" height="16" viewBox="0 0 16 16" fill="none">
            <circle cx="8" cy="8" r="5.300" stroke="#f5f5f5" strokeWidth="4.500" />
            <circle cx="8" cy="8" r="5.300" stroke="#ee4545" strokeWidth="4.500" strokeDasharray="4.600 3.730" strokeDashoffset="-1.860" />
            <g stroke="#b33" fill="#f4f4f4"><circle cx="2" cy="2" r="1.500" /><circle cx="14" cy="2" r="1.500" /><circle cx="2" cy="14" r="1.500" /><circle cx="14" cy="14" r="1.500" /></g>
          </svg>
          <Lbl>Ayuda</Lbl>
        </div>
      </div>
    </div>
  );
}

/* ---------- map ---------- */

const Island = ({ x, y, outline, lines }) => (
  <g transform={`translate(${x} ${y}) scale(.33333)`} stroke="#14251d" strokeWidth="3" strokeLinejoin="round">
    <path d={outline} fill="#0dc58c" />
    <path d={lines} fill="none" />
  </g>
);

function MapCanvas() {
  return (
    <div className="h-[592px] min-w-0 flex-1 overflow-hidden rounded-[2px] border-2 border-[#b8b8b8] border-r-[#c8c8c8] bg-white">
      <svg width="836" height="588" viewBox="354 135 836 588" className="block">
        <Island x={355} y={330}
          outline="M165 86L183 75 192 74 196 68 202 75 215 79 230 83 245 79 264 80 269 93 275 104 276 118 285 125 290 137 286 146 276 155 268 168 270 180 274 195 274 215 270 232 260 247 251 262 243 270 238 285 232 297 225 299 216 291 212 275 210 262 209 244 199 232 196 221 189 210 181 186 173 176 167 155 158 134 150 127 149 117 151 105 159 101z"
          lines="M155 101L163 112 180 117 198 125 209 128 221 123 230 126 235 139 237 155 230 163 238 172 240 190 235 210 230 235 209 242M230 83L227 108 224 124M270 92L250 101 238 112 227 128M275 115L250 125 232 132M158 134L180 130 206 130M206 130L200 145 192 162 190 177 205 182 202 195 210 210 213 242M190 177L181 184 196 202 199 222 189 216M232 135L258 137 268 141 276 155M232 165L243 165 250 172 265 167 270 180 257 192 240 203 234 213M240 209L260 197 274 199M230 214V248L250 262M184 186L192 190 195 215" />
        <Island x={355} y={330}
          outline="M488 447L500 443 514 439 522 446 532 446 535 450 551 449 556 457 565 463 578 476 590 479 597 487 597 510 588 520 580 526 568 537 560 546 549 546 540 551 524 551 508 545 497 535 482 517 473 508 474 477 480 458z"
          lines="M532 447L528 460 520 473 522 492 525 501 514 517 497 535M551 451L540 462 530 475 522 488M556 459L540 478 528 496M578 476L560 481 548 490 525 501 535 525 549 546M476 479L491 482 502 477 509 490 492 500 480 515" />
        <Island x={355} y={330}
          outline="M58 706L63 688 72 685 80 690 98 695 115 694 129 686 142 676 148 666 144 656 158 648 168 643 180 641 191 645 199 663 190 676 182 694 174 710 160 713 154 737 152 758 144 762 133 752 126 739 113 730 92 725 68 720 60 718z"
          lines="M148 660L149 690 140 706 117 710 90 712 68 708 64 720M70 710L140 713 152 710 157 725M152 710L142 703" />
        <Island x={570} y={395}
          outline="M44 171L54 166 74 164 84 154 92 150 101 157 115 160 137 158 139 153 172 150 180 146 192 151 207 149 211 153 228 149 225 142 235 137 249 140 260 127 274 122 284 107 297 98 299 78 309 66 327 59 341 58 342 46 352 50 366 48 372 55 390 52 410 50 427 42 440 43 449 55 446 71 435 78 415 85 402 95 388 101 384 115 370 129 358 137 350 148 340 150 327 165 326 185 322 197 319 215 306 231 301 243 292 266 291 290 281 299 262 320 246 341 232 357 208 356 190 367 178 366 163 374 150 370 145 347 136 335 139 327 120 302 102 276 94 258 87 240 85 226 74 211 65 196 58 184z"
          lines="M92 152L91 178 97 193 101 202 120 210 145 214 167 219M81 214L98 203M85 241L105 224 125 218 167 219M105 159L98 185 92 200M121 163L108 190 105 200M128 160L125 180 132 209M137 158L137 190 142 214M167 150L182 198M175 148L193 199M188 152L206 199 212 208M167 219L170 206 204 199 212 208 225 206 228 185 230 170 227 150M228 150L249 140M204 199L210 203M167 219L164 245 172 257 185 258 205 251 227 240 235 215 245 205 262 186 272 168 283 152M104 279L130 278 150 268 170 255M137 330L150 312 160 301 163 275 170 256M160 308L182 313 195 300 200 260 207 252 233 278 262 318M185 312V369M195 302L203 324 205 356M245 205L262 210 285 229 300 241M238 210L270 238 292 263M262 186L326 185M274 164L322 182M280 153L325 150 340 150M253 132L275 154M260 127L285 147M270 123L298 142M278 116L301 134M288 105L306 129M299 78L306 98 302 120 310 136M303 84L319 101 321 112 306 139M321 112L345 105 360 115 368 99 368 75 374 54M325 92L323 78 342 65 356 67 362 76 346 94 329 93zM345 123L355 118 362 127 357 137 343 136 338 128zM306 139L330 141 340 150M283 152L305 133" />
        <Island x={750} y={475}
          outline="M115 45L132 41 146 39 156 44 164 53 179 51 190 58 206 52 220 56 232 60 245 65 255 64 257 54 250 47 256 38 264 37 268 45 264 60 261 75 268 90 263 105 275 121 280 138 285 153 278 165 284 178 277 193 273 218 261 238 255 252 240 251 215 261 190 278 178 290 163 284 143 276 130 280 112 266 97 255 80 237 65 215 55 195 50 178 57 163 52 150 52 130 70 127 82 121 92 108 110 105 120 94 113 78 121 60z"
          lines="M115 73L131 86 145 105M146 42L152 75 150 97 162 123M118 97L145 108 162 123 190 130 216 116 245 108 260 110M179 53L172 75 158 88 150 97M188 59L187 90 175 108 166 124M196 56L190 95M220 57L207 92 191 95 183 120M236 63L220 84 210 112M172 76L190 58M91 110L95 125 92 143 100 165 104 172 93 190 68 215M97 148L120 142 135 133 162 123 176 152 190 162 204 168M101 165L125 168 135 187 131 225 133 278M135 187L157 176 164 163 182 170 190 162M190 160L193 140 210 132 240 132 238 148 215 160 204 168M197 128L230 125 270 120M204 168L280 174M204 168L220 182 240 188 277 192M204 168L212 200 240 212 274 220M204 168L191 188 201 208 207 223 232 229 255 250M202 128L225 115M210 105L207 92" />
        <path d="M836 490l3-1.500 1 2v6.500z" fill="#333" />
        <Island x={980} y={265}
          outline="M518 34L529 33 543 41 538 52 528 68 515 71 506 69 510 61 518 58 521 44zM544 62L550 68 564 73 572 85 570 104 561 112 557 118 549 125 555 140 552 158 549 181 540 196 525 206 510 216 491 223 477 230 463 240 431 243 414 250 405 268 396 284 389 288 382 276 344 279 342 262 357 253 365 238 363 208 369 185 382 171 402 154 427 151 440 141 455 127 462 132 484 118 499 126 515 122 519 100 526 82 539 71z"
          lines="M515 122L535 138 555 148M459 130L461 165 457 184 478 188 489 192 508 195 507 203 525 206M378 176L400 190 420 203 433 202 453 190 457 184M433 202L429 222 432 243M457 190L467 207 480 228M487 191L491 222" />
        <Island x={980} y={265}
          outline="M365 337L377 331 376 346 369 346zM274 361L290 352 306 345 326 339 342 339 350 349 361 352 367 369 366 389 368 413 371 432 369 459 357 470 354 490 357 517 360 535 351 553 344 575 341 592 334 600 332 616 323 630 315 635 300 636 281 647 250 652 220 660 205 665 186 669 174 676 162 695 143 716 121 742 95 739 70 733 48 725 35 725 33 731 33 717 38 709 70 710 101 704 133 684 164 656 177 638 179 611 183 580 197 568 203 550 206 525 221 507 241 487 249 462 261 439 266 420 267 402 278 386z"
          lines="M263 440L280 444 300 440 325 441 350 439 370 443M241 487L260 491 267 502 276 510 310 510 333 518 358 525M276 512L262 515 263 530 256 546 253 557 227 551 205 535M254 553L290 574 306 595 325 622M254 556L250 576 227 592 219 603 206 603 214 618 213 640 220 660" />
      </svg>
    </div>
  );
}

/* ---------- window ---------- */

const MENU = [
  ["Proyecto", "w-[58px]"], ["Edición", "w-[48px]"], ["Ver", "w-[30px]"], ["Capa", "w-[40px]"], ["Configuración", "w-[81px]"],
  ["Complementos", "w-[85px]"], ["Vectorial", "w-[55px]"], ["Ráster", "w-[47px]"], ["Base de datos", "w-[83px]"], ["Web", "w-[37px]"],
  ["Procesos", "w-[58px]"], ["Ayuda", "w-[40px]"],
];

export default function App() {
  return (
    <div className="flex h-[758px] w-[1194px] flex-col overflow-hidden whitespace-nowrap bg-[#dedede] font-['DejaVu_Sans_Condensed','DejaVu_Sans',sans-serif] text-[11px] leading-[14px] tracking-[-0.25px] text-black [font-stretch:condensed]">
      <div className="flex h-px shrink-0"><div className="w-[110px] bg-[#04152b]" /><div className="w-[10px] bg-[#dedede]" /><div className="w-[11px] bg-[#2b7fc0]" /></div>
      <div className="flex h-[755px] w-[1193px] shrink-0 flex-col border-r border-t border-[#9c9c9c] bg-[#efefef]">
        <div className="flex h-[31px] shrink-0 items-center bg-white pl-[8px]">
          <svg width="16" height="16" viewBox="0 0 16 16" fill="none"><path d="M3 4c2-3 6-3 8-1s2 7-1 9-6 1-7-2-1-4 0-6z" fill="#dcec5a" stroke="#a9c63a" /><path d="M13 1C9 2.500 6.500 5 5.500 11M5.500 11L3 15M10 4L5 9" stroke="#1c6a24" strokeWidth="1.400" /><path d="M10 12l3 2" stroke="#b9cc50" strokeWidth="2" /></svg>
          <span className="ml-[5px] font-['Open_Sans',sans-serif] text-[12px] tracking-[-0.4px] text-[#999] [font-stretch:normal]">QGIS 2.10.1-Pisa</span>
          <div className="ml-auto mr-[17px] flex gap-[35px]">
            <svg width="11" height="11"><path d="M0 5.500h11" stroke="#8a8a8a" /></svg>
            <svg width="11" height="11"><rect x=".5" y=".5" width="9" height="9" fill="none" stroke="#8a8a8a" /></svg>
            <svg width="11" height="11"><path d="M.500 .500l10 10M10.500 .500l-10 10" stroke="#8a8a8a" /></svg>
          </div>
        </div>
        <div className="flex h-[22px] shrink-0 items-center border-b border-[#b5b5b5] pl-[9px] pt-[2px]">
          {MENU.map(([t, w]) => <div key={t} className={`${w} shrink-0`}>{t}</div>)}
        </div>
        <div className="shrink-0 border-b border-[#b5b5b5]"><ToolbarOne /></div>
        <div className="shrink-0 border-b-2 border-[#bdbdbd]"><ToolbarTwo /></div>
        <div className="flex h-[592px] shrink-0">
          <SideBar />
          <Docks />
          <div className="flex w-[4px] shrink-0 items-center justify-center"><Dots n={38} vertical /></div>
          <MapCanvas />
        </div>
        <div className="flex h-[31px] shrink-0 items-center pl-[272px] tracking-[0px]">
          <div className="flex h-[20px] w-[20px] items-center justify-center rounded-[2px] border border-[#888] bg-[#f3f3f3]">
            <svg width="16" height="16" viewBox="0 0 16 16" fill="none"><path d="M2.500 3.500C3 1 6 1 7.500 3l3 5-4 4C3.500 9.500 1.500 6.500 2.500 3.500z" fill="#999" stroke="#222" strokeWidth="1.500" /><path d="M4.500 2l4 8M3 5.500l5-2.500M4 9l5-3" stroke="#222" strokeWidth="1.400" /><circle cx="10" cy="11" r="3.500" fill="#ddd" stroke="#222" strokeWidth="1.500" /><circle cx="10" cy="11" r="1" fill="#222" /><path d="M9 4l6-3M1 11l3 2" stroke="#222" strokeDasharray="2 1" /></svg>
          </div>
          <div className="ml-[8px] w-[73px] pt-[2px]">Coordenada:</div>
          <div className={`${field} flex h-[20px] w-[269px] items-center justify-center tracking-[-0.25px]`}><Lbl>370155,3242921</Lbl></div>
          <div className="ml-[8px] w-[43px] pt-[2px]">Escala</div>
          <div className={`${field} flex h-[20px] w-[89px] items-center`}>
            <div className="ml-px flex w-[70px] justify-end overflow-hidden pr-[4px] pt-[2px] tracking-[0px]">2.147.483.648</div>
            <div className="flex h-full flex-1 items-center justify-center border-l border-[#b0b0b0] bg-[#f3f3f3]"><Down /></div>
          </div>
          <div className="ml-[8px] w-[56px] pt-[2px]">Rotación:</div>
          <div className={`${field} flex h-[25px] w-[97px] items-center pl-[3px]`}>
            <Lbl className="flex-1">0,0</Lbl>
            <div className="flex h-full w-[16px] flex-col border-l border-[#b0b0b0] bg-[#f3f3f3]">
              <div className="flex flex-1 items-center justify-center border-b border-[#b0b0b0]"><svg width="7" height="4"><path d="M0 4l3.500-4L7 4z" /></svg></div>
              <div className="flex flex-1 items-center justify-center"><svg width="7" height="4"><path d="M0 0h7L3.500 4z" /></svg></div>
            </div>
          </div>
          <div className="ml-[7px] flex"><Check /></div>
          <div className="ml-[4px] w-[79px] pt-[1px]">Representar</div>
          <svg width="16" height="16" viewBox="0 0 16 16" fill="none" className="shrink-0" stroke="#777"><circle cx="8" cy="8" r="6.500" fill="#c4c4c4" strokeWidth="1.300" /><path d="M8 1v14M1 8h14M8 4l4 4-4 4-4-4z" fill="#eee" /></svg>
          <div className="ml-[3px] w-[76px] pt-[2px] tracking-[-0.15px]">EPSG:4326</div>
          <svg width="17" height="16" viewBox="0 0 17 16" className="shrink-0"><path d="M8.500 1C13 1 16.500 3.500 16.500 7c0 2-1 3.500-2.500 4.500 0 1.500.5 2.500 1.500 3.500-2.500 0-4-.8-5-2-6 .6-10-2-10-6S4 1 8.500 1z" fill="#666" /></svg>
          <svg width="12" height="12" viewBox="0 0 12 12" className="ml-auto mt-auto shrink-0"><path d="M0 12L12 0M4 12l8-8M8 12l4-4" stroke="#999" strokeWidth="1.300" /></svg>
        </div>
      </div>
      <div className="flex flex-1 border-t border-[#9c9c9c]"><div className="w-[110px] bg-[#04152b]" /></div>
    </div>
  );
}
